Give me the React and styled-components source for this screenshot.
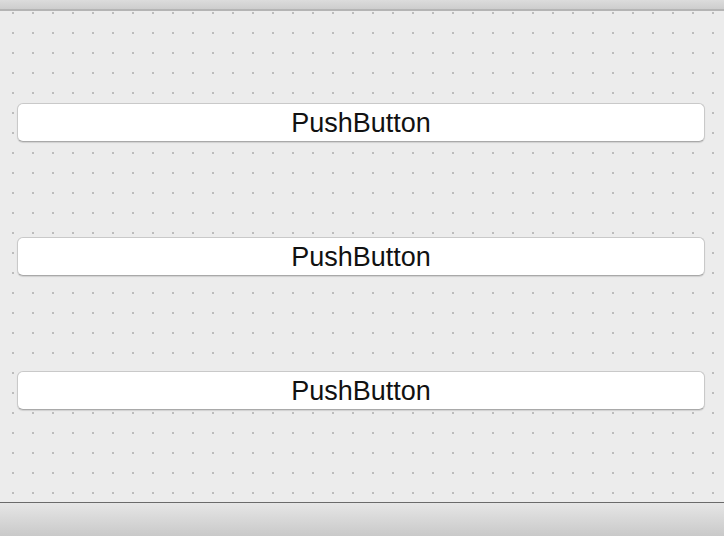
import React from 'react';
import styled, { createGlobalStyle } from 'styled-components';

const Global = createGlobalStyle`
  html, body {
    margin: 0;
    padding: 0;
    width: 724px;
    height: 536px;
    overflow: hidden;
    background: #ececec;
  }
`;

// window frame
const Frame = styled.div`
  display: flex;
  flex-direction: column;
  width: 724px;
  height: 536px;
`;

const TopBar = styled.div`
  height: 9px;
  background: linear-gradient(#dcdcdc, #cdcdcd);
  border-bottom: 2px solid #b4b4b4;
  flex-shrink: 0;
`;

// designer grid canvas, 2px square dots every 20px
const Canvas = styled.div`
  flex: 1;
  display: flex;
  flex-direction: column;
  gap: 95px;
  padding: 92px 19px 0 17px;
  background-color: #ececec;
  background-image: conic-gradient(from 0deg at 2px 2px, transparent 75%, #bcbcbc 0);
  background-size: 20px 20px;
  background-position: 12px 1px;
`;

const BottomBar = styled.div`
  height: 33px;
  flex-shrink: 0;
  border-top: 1px solid #6a6a6a;
  background: linear-gradient(#e6e6e6, #c9c9c9);
`;

const PushButton = styled.button`
  height: 39px;
  width: 100%;
  box-sizing: border-box;
  background: #ffffff;
  border: 1px solid #c9c9c9;
  border-bottom-color: #a9a9a9;
  border-radius: 6px;
  box-shadow: 0 1px 1px rgba(0, 0, 0, 0.12);
  font-family: 'Liberation Sans', Arial, sans-serif;
  font-size: 27px;
  color: #111;
  padding: 2px 0 0;
  line-height: 1;
`;

const App = () => {
  const buttons = ['PushButton', 'PushButton', 'PushButton'];
  return (
    <Frame>
      <Global />
      <TopBar />
      <Canvas>
        {buttons.map((label, index) => (
          <PushButton key={index}>{label}</PushButton>
        ))}
      </Canvas>
      <BottomBar />
    </Frame>
  );
};

export default App;
